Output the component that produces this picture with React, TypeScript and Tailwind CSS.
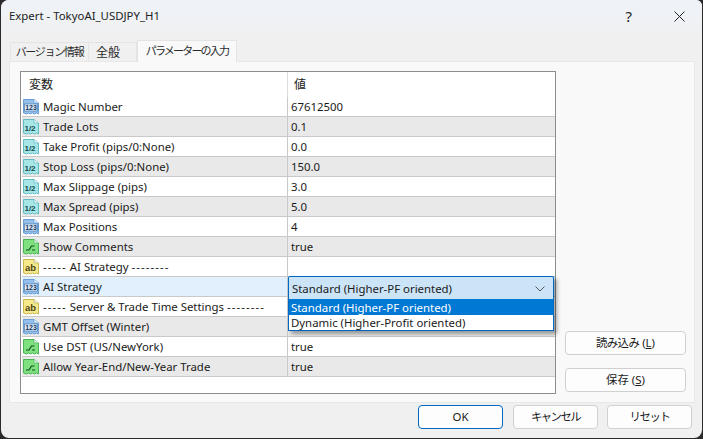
import React from 'react';

type IconKind = 'int' | 'dbl' | 'bool' | 'str';

const palette = {
  int: { fill: '#93c0ec', stroke: '#6b9fd4', label: '123' },
  dbl: { fill: '#a6e6e6', stroke: '#62bcc4', label: '1/2' },
  bool: { fill: '#7fe07f', stroke: '#4cb454', label: '' },
  str: { fill: '#f5e98e', stroke: '#c9b84e', label: 'ab' },
};

const ParamIcon = ({ kind }: { kind: IconKind }) => {
  const c = palette[kind];
  return (
    <svg width="16" height="16" viewBox="0 0 16 16" className="shrink-0">
      <path
        d="M0.5 0.5H11L15.5 4V15L13.5 14L11.5 15L9.5 14L7.5 15L5.5 14L3.5 15L0.5 14Z"
        fill={c.fill}
        stroke={c.stroke}
        strokeWidth="1"
      />
      <path d="M11 0.5V4H15.5" fill="#e8f4fb" stroke={c.stroke} strokeWidth="0.7" />
      {kind === 'bool' ? (
        <path d="M3 11H6L8.5 7H11.5M9 11H12" fill="none" stroke="#124d1c" strokeWidth="1.2" />
      ) : kind === 'int' ? (
        <>
          <rect x="1.5" y="5" width="13" height="7" fill="#e3f0fb" stroke="#3d6fa6" strokeWidth="0.6" />
          <text x="8" y="11" textAnchor="middle" fontSize="7" fontWeight="700" fontFamily="'Liberation Sans', sans-serif" fill="#12345e">{c.label}</text>
        </>
      ) : kind === 'dbl' ? (
        <text x="7" y="11.5" textAnchor="middle" fontSize="8" fontWeight="700" fontFamily="'Liberation Sans', sans-serif" fill="#124a50">{c.label}</text>
      ) : (
        <text x="7.5" y="11.5" textAnchor="middle" fontSize="9.5" fontWeight="700" fontFamily="'Liberation Sans', sans-serif" fill="#4e4410">{c.label}</text>
      )}
    </svg>
  );
};

const rows: { kind: IconKind; name: string; value: string; tone: 'white' | 'gray' | 'blue' }[] = [
  { kind: 'int', name: 'Magic Number', value: '67612500', tone: 'white' },
  { kind: 'dbl', name: 'Trade Lots', value: '0.1', tone: 'gray' },
  { kind: 'dbl', name: 'Take Profit (pips/0:None)', value: '0.0', tone: 'white' },
  { kind: 'dbl', name: 'Stop Loss (pips/0:None)', value: '150.0', tone: 'gray' },
  { kind: 'dbl', name: 'Max Slippage (pips)', value: '3.0', tone: 'white' },
  { kind: 'dbl', name: 'Max Spread (pips)', value: '5.0', tone: 'gray' },
  { kind: 'int', name: 'Max Positions', value: '4', tone: 'white' },
  { kind: 'bool', name: 'Show Comments', value: 'true', tone: 'gray' },
  { kind: 'str', name: '----- AI Strategy --------', value: '', tone: 'white' },
  { kind: 'int', name: 'AI Strategy', value: '', tone: 'blue' },
  { kind: 'str', name: '----- Server & Trade Time Settings --------', value: '', tone: 'white' },
  { kind: 'int', name: 'GMT Offset (Winter)', value: '', tone: 'gray' },
  { kind: 'bool', name: 'Use DST (US/NewYork)', value: 'true', tone: 'white' },
  { kind: 'bool', name: 'Allow Year-End/New-Year Trade', value: 'true', tone: 'gray' },
];

const toneClass = {
  white: 'bg-white',
  gray: 'bg-[#e9e9e9]',
  blue: 'bg-[#e1f0fc]',
};

// the dash runs come out wider in the reference font
const ParamName = ({ name }: { name: string }) => (
  <span>
    {name.split(/(-{3,})/).map((part, i) => (
      <span key={i} className={part.startsWith('---') ? 'tracking-[1.1px]' : ''}>
        {part}
      </span>
    ))}
  </span>
);

const Btn = ({ children, primary }: { children: React.ReactNode; primary?: boolean }) => (
  <button
    className={
      'h-[24px] w-[85px] rounded-[4px] bg-[#fdfdfd] text-[#1a1a1a] border ' +
      (primary ? 'border-[#0067c0]' : 'border-[#d0d0d0]')
    }
  >
    {children}
  </button>
);

export default function App() {
  return (
    <div
      className="w-[703px] h-[439px] bg-[#2b2b2b] overflow-hidden text-[11.4px] text-[#1a1a1a]"
      style={{ fontFamily: "'Noto Sans', 'Noto Sans CJK JP', sans-serif" }}
    >
      <div className="ml-[1px] w-[701px] h-[438px] rounded-[8px] rounded-tr-[6px] bg-[#f0f0f0] flex flex-col overflow-hidden">
        {/* title bar */}
        <div className="h-[39px] shrink-0 flex items-center bg-gradient-to-b from-[#eef3f9] to-[#f0f0f0] pl-[8px] pb-[7px]">
          <span className="text-[#222]">Expert - TokyoAI_USDJPY_H1</span>
          <span className="ml-auto mr-[42px] text-[15px] text-[#222]">?</span>
          <svg width="11" height="11" viewBox="0 0 11 11" className="mr-[17px]">
            <path d="M0.5 0.5L10.5 10.5M10.5 0.5L0.5 10.5" stroke="#222" strokeWidth="1" />
          </svg>
        </div>

        {/* tabs */}
        <div className="h-[22px] shrink-0 flex items-end pl-[9px] text-[#2a2a2a] whitespace-nowrap">
          <div className="h-[19px] w-[79px] pt-[1px] flex items-center justify-center bg-[#f0f0f0] border border-b-0 border-[#e4e4e4] text-[11px] tracking-[-1.3px]">バージョン情報</div>
          <div className="h-[19px] w-[48px] pt-[1px] pr-[9px] flex items-center justify-center bg-[#f0f0f0] border border-l-0 border-b-0 border-[#e4e4e4] text-[12px]">全般</div>
          <div className="h-[22px] w-[100px] flex items-center justify-center bg-[#f9f9f9] border border-b-0 border-[#e4e4e4] text-[11px] tracking-[-1.8px] -mb-[1px] relative">パラメーターの入力</div>
        </div>

        {/* panel */}
        <div className="ml-[8px] w-[686px] h-[342px] shrink-0 bg-[#f9f9f9] border border-[#e8e8e8] flex pl-[10px] pt-[9px]">
          <div className="relative w-[536px] h-[323px] shrink-0 bg-white border border-[#8c8c8c] pl-[1px]">
            <div className="flex h-[25px] w-[533px]">
              <div className="w-[266px] pl-[7px] flex items-center border-r border-[#dcdcdc] text-[12px]">変数</div>
              <div className="pl-[6px] flex items-center text-[12px]">値</div>
            </div>
            {rows.map((r) => (
              <div key={r.name} className={'flex h-[20px] w-[533px] border-b border-[#c9c9c9] ' + toneClass[r.tone]}>
                <div className="w-[266px] flex items-center pl-[1px] gap-[4px] border-r border-[#c9c9c9] whitespace-nowrap">
                  <ParamIcon kind={r.kind} />
                  <ParamName name={r.name} />
                </div>
                <div className="pl-[3px] flex items-center">{r.value}</div>
              </div>
            ))}

            {/* open combo box */}
            <div className="absolute left-[267px] top-[204px] w-[266px] shadow-[3px_3px_4px_rgba(0,0,0,0.35)]">
              <div className="h-[23px] pt-[1px] flex items-center pl-[3px] pr-[8px] rounded-t-[2px] bg-[#cce4f7] border border-[#0067c0] border-b-0">
                <span>Standard (Higher-PF oriented)</span>
                <svg width="10" height="6" viewBox="0 0 10 6" className="ml-auto">
                  <path d="M0.5 0.5L5 5L9.5 0.5" fill="none" stroke="#555" strokeWidth="1" />
                </svg>
              </div>
              <div className="border border-[#0067c0] border-t-0 bg-white">
                <div className="h-[16px] pt-[2px] flex items-center pl-[2px] bg-[#0078d4] text-white">Standard (Higher-PF oriented)</div>
                <div className="h-[15px] flex items-center pl-[2px]">Dynamic (Higher-Profit oriented)</div>
              </div>
            </div>
          </div>

          {/* side buttons */}
          <div className="ml-[9px] mt-[260px] flex flex-col gap-[13px]">
            <button className="w-[121px] h-[24px] rounded-[4px] bg-[#fdfdfd] border border-[#d0d0d0]"><span className="tracking-[-0.6px]">読み込み</span> (<span className="underline">L</span>)</button>
            <button className="w-[121px] h-[24px] rounded-[4px] bg-[#fdfdfd] border border-[#d0d0d0]">保存 (<span className="underline">S</span>)</button>
          </div>
        </div>

        {/* footer */}
        <div className="flex justify-end pr-[10px] pt-[2px]">
          <Btn primary>OK</Btn>
          <div className="ml-[10px]"><Btn><span className="tracking-[-1.6px]">キャンセル</span></Btn></div>
          <div className="ml-[9px]"><Btn><span className="tracking-[-1.4px]">リセット</span></Btn></div>
        </div>
      </div>
    </div>
  );
}
